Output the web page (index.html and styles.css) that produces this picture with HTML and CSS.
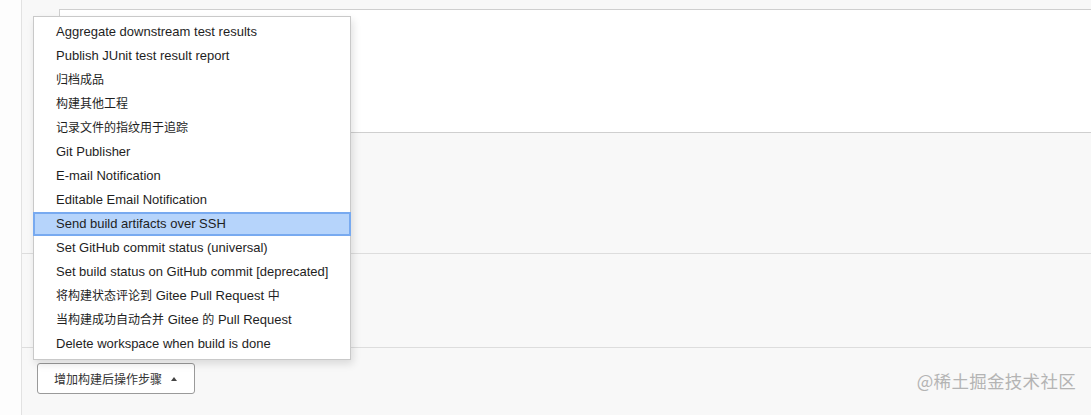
FILE: index.html
```html
<!DOCTYPE html>
<html lang="zh">
<head>
<meta charset="utf-8">
<title>Post-build actions</title>
<link rel="stylesheet" href="styles.css">
</head>
<body>
<div class="page">
  <div class="side"></div>
  <div class="main">
    <div class="sec sec-top">
      <div class="textarea"></div>
    </div>
    <div class="sec sec-a"></div>
    <div class="sec sec-b"></div>
    <div class="actions">
      <button class="add-btn" type="button">增加构建后操作步骤 <span class="caret"></span></button>
    </div>
  </div>
</div>

<ul class="menu">
  <li>Aggregate downstream test results</li>
  <li>Publish JUnit test result report</li>
  <li><span class="cjk">归档成品</span></li>
  <li><span class="cjk">构建其他工程</span></li>
  <li><span class="cjk">记录文件的指纹用于追踪</span></li>
  <li>Git Publisher</li>
  <li>E-mail Notification</li>
  <li>Editable Email Notification</li>
  <li class="active">Send build artifacts over SSH</li>
  <li>Set GitHub commit status (universal)</li>
  <li>Set build status on GitHub commit [deprecated]</li>
  <li><span class="cjk">将构建状态评论到</span> Gitee Pull Request <span class="cjk">中</span></li>
  <li><span class="cjk">当构建成功自动合并</span> Gitee <span class="cjk">的</span> Pull Request</li>
  <li>Delete workspace when build is done</li>
</ul>

<div class="watermark">@稀土掘金技术社区</div>
</body>
</html>
```

FILE: styles.css
```css
html, body {
  margin: 0;
  padding: 0;
  height: 100%;
}
body {
  background: #ffffff;
  font-family: "Liberation Sans", Arial, "Noto Sans CJK SC", sans-serif;
  color: #222;
  overflow: hidden;
}
.page {
  display: flex;
  height: 415px;
}
.side {
  width: 21px;
  flex: none;
  background: #fdfdfd;
  border-right: 1px solid #e2e2e2;
}
.main {
  flex: 1;
  background: #f8f8f8;
  display: flex;
  flex-direction: column;
}
.sec-top {
  padding: 9px 0 0 37px;
}
.textarea {
  height: 122px;
  background: #fff;
  border: 1px solid #cfcfcf;
  border-right: none;
}
.sec-a {
  height: 120px;
  border-bottom: 1px solid #dddddd;
}
.sec-b {
  height: 93px;
  border-bottom: 1px solid #dddddd;
}
.actions {
  padding: 15px 0 0 15px;
}
.add-btn {
  display: flex;
  align-items: center;
  gap: 6px;
  height: 31px;
  padding: 0 17px 0 16px;
  border: 1px solid #9a9a9a;
  border-radius: 3px;
  background: #fff;
  color: #333;
  font-family: "Liberation Sans", Arial, "Noto Sans CJK SC", sans-serif;
  font-size: 12px;
}
.caret {
  width: 0;
  height: 0;
  border-left: 3.5px solid transparent;
  border-right: 3.5px solid transparent;
  border-bottom: 4px solid #444;
  margin-left: 3px;
}
.menu {
  position: absolute;
  left: 33px;
  top: 16px;
  width: 316px;
  margin: 0;
  padding: 3px 0;
  list-style: none;
  background: #fff;
  border: 1px solid #c9c9c9;
  box-shadow: 2px 4px 8px rgba(0, 0, 0, 0.12);
  font-size: 13px;
}
.menu li {
  height: 24px;
  line-height: 24px;
  padding-left: 22px;
  white-space: nowrap;
  color: #1e1e1e;
}
.menu .cjk {
  font-size: 12px;
}
.menu li.active {
  background: #b6d4fb;
  outline: 2px solid #78aaf0;
  outline-offset: -2px;
  margin-left: -1px;
  margin-right: -1px;
  padding-left: 23px;
}
.watermark {
  position: absolute;
  right: 15px;
  bottom: 22px;
  font-family: "Noto Sans CJK SC", sans-serif;
  font-size: 17.5px;
  color: #b4b4b4;
  letter-spacing: 0.3px;
}
```
